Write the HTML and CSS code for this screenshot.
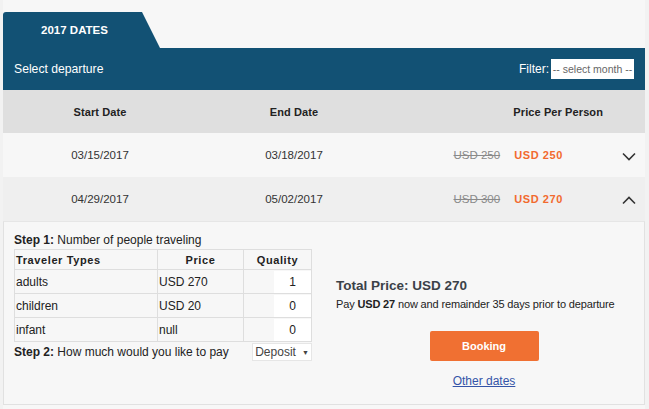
FILE: index.html
```html
<!DOCTYPE html>
<html>
<head>
<meta charset="utf-8">
<link rel="stylesheet" href="styles.css">
</head>
<body>
<div class="wrap">
  <div class="tabs"><div class="tab">2017 DATES</div></div>
  <div class="bar">
    <span class="bar-title">Select departure</span>
    <label class="filter">Filter: <span class="select">-- select month --</span></label>
  </div>
  <div class="row head">
    <div class="c1">Start Date</div>
    <div class="c2">End Date</div>
    <div class="c3h">Price Per Person</div>
  </div>
  <div class="row">
    <div class="c1">03/15/2017</div>
    <div class="c2">03/18/2017</div>
    <div class="c3"><s>USD 250</s><b>USD 250</b></div>
    <div class="c4"><svg width="14" height="9" viewBox="0 0 14 9"><path d="M1 1.5 L7 7.5 L13 1.5" fill="none" stroke="#333" stroke-width="1.6"/></svg></div>
  </div>
  <div class="row alt">
    <div class="c1">04/29/2017</div>
    <div class="c2">05/02/2017</div>
    <div class="c3"><s>USD 300</s><b>USD 270</b></div>
    <div class="c4"><svg width="14" height="9" viewBox="0 0 14 9"><path d="M1 7.5 L7 1.5 L13 7.5" fill="none" stroke="#333" stroke-width="1.6"/></svg></div>
  </div>
  <div class="panel">
    <div class="left">
      <p class="step"><b>Step 1:</b> Number of people traveling</p>
      <table class="tt">
        <tr><th class="ta">Traveler Types</th><th>Price</th><th>Quality</th></tr>
        <tr><td class="ta">adults</td><td>USD 270</td><td class="q"><span class="inp">1</span></td></tr>
        <tr><td class="ta">children</td><td>USD 20</td><td class="q"><span class="inp">0</span></td></tr>
        <tr><td class="ta">infant</td><td>null</td><td class="q"><span class="inp">0</span></td></tr>
      </table>
      <div class="step2"><span><b>Step 2:</b> How much would you like to pay</span><span class="dep">Deposit <i>&#9660;</i></span></div>
    </div>
    <div class="right">
      <div class="total">Total Price: USD 270</div>
      <div class="pay">Pay <b>USD 27</b> now and remainder 35 days prior to departure</div>
      <div class="btnwrap"><span class="btn">Booking</span></div>
      <div class="linkwrap"><a href="#" class="other">Other dates</a></div>
    </div>
  </div>
</div>
</body>
</html>
```
FILE: styles.css
```css
* { box-sizing: border-box; }
html, body { margin: 0; padding: 0; }
body {
  background: #f2f2f2;
  font-family: "Liberation Sans", Arial, sans-serif;
  color: #222;
  width: 649px;
  height: 409px;
  overflow: hidden;
}
.wrap {
  width: 642px;
  margin-left: 3px;
  padding-top: 12px;
  background: #f7f7f7;
  height: 409px;
}
.tabs { height: 36px; display: flex; }
.tab {
  width: 157px;
  height: 36px;
  background: #125174;
  border-top-left-radius: 3px;
  clip-path: polygon(0 0, 139px 0, 157px 100%, 0 100%);
  color: #fff;
  font-weight: bold;
  font-size: 11.5px;
  padding-right: 14px;
  display: flex;
  align-items: center;
  justify-content: center;
}
.bar {
  height: 42px;
  background: #125174;
  color: #fff;
  display: flex;
  align-items: center;
  justify-content: space-between;
  padding: 0 11px 0 11px;
}
.bar-title { font-size: 12.2px; }
.filter { font-size: 12px; display: flex; align-items: center; gap: 2px; }
.select {
  display: inline-block;
  width: 83px;
  height: 20px;
  line-height: 20px;
  background: #fff;
  color: #666;
  font-size: 10.5px;
  text-align: center;
  white-space: nowrap;
  overflow: hidden;
}
.row {
  height: 44px;
  display: flex;
  align-items: center;
  font-size: 11.5px;
  color: #333;
  background: #f7f7f7;
}
.row.head { height: 43px; background: #dfdfdf; font-weight: bold; font-size: 11px; color: #222; letter-spacing: 0.1px; }
.row.alt { background: #efefef; }
.c1 { width: 194px; text-align: center; }
.c2 { width: 194px; text-align: center; }
.c3h { flex: 1; text-align: right; padding-right: 42px; }
.c3 { flex: 1; display: flex; justify-content: flex-end; gap: 14px; padding-right: 22px; }
.c3 s { color: #8a8a8a; }
.c3 b { color: #f26a2e; letter-spacing: 0.6px; font-size: 11px; }
.c4 { width: 60px; display: flex; justify-content: flex-start; padding-left: 37px; padding-top: 2px; }
.panel {
  border: 1px solid #e1e1e1;
  border-top: 1px solid #e6e6e6;
  height: 184px;
  display: flex;
  background: #f7f7f7;
}
.left { width: 320px; padding: 11px 0 0 10px; }
.step { margin: 0 0 2px 0; font-size: 12px; color: #222; }
.tt { border-collapse: collapse; width: 298px; font-size: 12px; }
.tt th, .tt td { border: 1px solid #dedede; padding: 0 1px; }
.tt th { height: 20px; text-align: center; font-weight: bold; font-size: 11px; letter-spacing: 0.6px; }
.tt th.ta { text-align: left; }
.tt td { height: 24px; text-align: left; }
.tt th:nth-child(1) { width: 143px; }
.tt th:nth-child(2) { width: 86px; }
.tt td.q { text-align: right; padding: 0; }
.inp {
  display: inline-block;
  width: 37px;
  height: 22px;
  line-height: 22px;
  background: #fff;
  text-align: center;
  vertical-align: middle;
  font-size: 12px;
}
.step2 {
  display: flex;
  justify-content: space-between;
  align-items: center;
  width: 298px;
  font-size: 12px;
  margin-top: 1px;
}
.dep {
  width: 60px;
  height: 18px;
  background: #fff;
  border: 1px solid #e6e6e6;
  color: #444;
  font-size: 12px;
  display: flex;
  align-items: center;
  justify-content: center;
  gap: 6px;
}
.dep i { font-style: normal; font-size: 7px; }
.right { flex: 1; padding: 56px 0 0 12px; }
.total { font-size: 13.5px; font-weight: bold; color: #3b4148; }
.pay { font-size: 11px; letter-spacing: -0.15px; margin-top: 5px; color: #222; white-space: nowrap; }
.btnwrap { display: flex; justify-content: center; margin-top: 21px; padding-right: 12px; }
.btn {
  width: 109px;
  height: 30px;
  background: #f07032;
  border-radius: 2px;
  color: #fff;
  font-weight: bold;
  font-size: 11px;
  display: flex;
  align-items: center;
  justify-content: center;
}
.linkwrap { text-align: center; margin-top: 10px; padding-right: 12px; }
.other { color: #3454a8; font-size: 12px; text-decoration: underline; }
```
